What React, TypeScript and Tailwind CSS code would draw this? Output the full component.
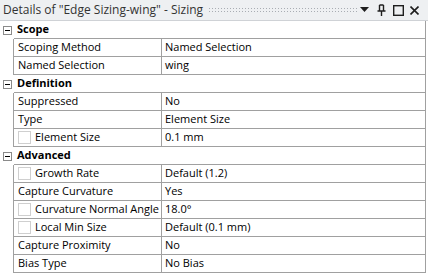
import React from 'react';

type Row =
  | { kind: 'group'; label: string }
  | { kind: 'prop'; label: string; value: string; check?: boolean };

const rows: Row[] = [
  { kind: 'group', label: 'Scope' },
  { kind: 'prop', label: 'Scoping Method', value: 'Named Selection' },
  { kind: 'prop', label: 'Named Selection', value: 'wing' },
  { kind: 'group', label: 'Definition' },
  { kind: 'prop', label: 'Suppressed', value: 'No' },
  { kind: 'prop', label: 'Type', value: 'Element Size' },
  { kind: 'prop', label: 'Element Size', value: '0.1 mm', check: true },
  { kind: 'group', label: 'Advanced' },
  { kind: 'prop', label: 'Growth Rate', value: 'Default (1.2)', check: true },
  { kind: 'prop', label: 'Capture Curvature', value: 'Yes' },
  { kind: 'prop', label: 'Curvature Normal Angle', value: '18.0°', check: true },
  { kind: 'prop', label: 'Local Min Size', value: 'Default (0.1 mm)', check: true },
  { kind: 'prop', label: 'Capture Proximity', value: 'No' },
  { kind: 'prop', label: 'Bias Type', value: 'No Bias' },
];

// collapse box in front of a group row
function Minus() {
  return (
    <div className="w-[9px] h-[9px] border border-[#8a8a8a] bg-white flex items-center justify-center">
      <div className="w-[5px] h-px bg-black" />
    </div>
  );
}

function Check() {
  return <div className="w-[13px] h-[13px] border border-[#cfcfcf] bg-white shrink-0" />;
}

export default function App() {
  return (
    <div className="w-[428px] h-[275px] bg-white overflow-hidden text-[11px] text-black" style={{ fontFamily: '"Open Sans", "Noto Sans", sans-serif' }}>
      {/* title bar */}
      <div className="h-[21px] bg-[#eef0f2] border-b border-[#cfd2d6] flex items-center pl-[3px] pr-[9px]">
        <span className="text-[12px] text-[#333] whitespace-nowrap leading-none">Details of "Edge Sizing-wing" - Sizing</span>
        <div className="flex-1 h-[6px] ml-[5px] bg-[radial-gradient(#a9adb3_0.7px,transparent_0.9px)] bg-[length:3px_3px]" />
        <svg width="9" height="6" viewBox="0 0 9 6" className="ml-[3px]"><path d="M0 0h9L4.5 5z" fill="#1e1e1e" /></svg>
        <svg width="9" height="12" viewBox="0 0 9 12" className="ml-[8px]">
          <path d="M2.5 1h4M2.5 1v6M6.5 1v6M0.5 7h8M4.5 7v5" stroke="#1e1e1e" strokeWidth="1.4" fill="none" />
        </svg>
        <svg width="11" height="11" viewBox="0 0 11 11" className="ml-[7px]"><rect x="0.7" y="0.7" width="9.6" height="9.6" stroke="#1e1e1e" strokeWidth="1.4" fill="none" /></svg>
        <svg width="9" height="9" viewBox="0 0 9 9" className="ml-[6px]"><path d="M0.5 0.5l8 8M8.5 0.5l-8 8" stroke="#1e1e1e" strokeWidth="1.6" /></svg>
      </div>

      <div className="pr-[2px]">
        {rows.map((r, i) =>
          r.kind === 'group' ? (
            <div key={i} className="flex h-[18px]">
              <div className="w-[14px] flex items-center justify-center shrink-0"><Minus /></div>
              <div className="flex-1 flex items-center pl-[3px] font-bold border-b border-r border-[#a0a0a0]">{r.label}</div>
            </div>
          ) : (
            <div key={i} className="flex h-[18px]">
              <div className="w-[13px] shrink-0" />
              <div className="w-[149px] shrink-0 flex items-center gap-[4px] pl-[4px] border-l border-b border-r border-[#a0a0a0] whitespace-nowrap">
                {r.check && <Check />}
                <span>{r.label}</span>
              </div>
              <div className="flex-1 flex items-center pl-[3px] border-b border-r border-[#a0a0a0] whitespace-nowrap">{r.value}</div>
            </div>
          )
        )}
      </div>
    </div>
  );
}
